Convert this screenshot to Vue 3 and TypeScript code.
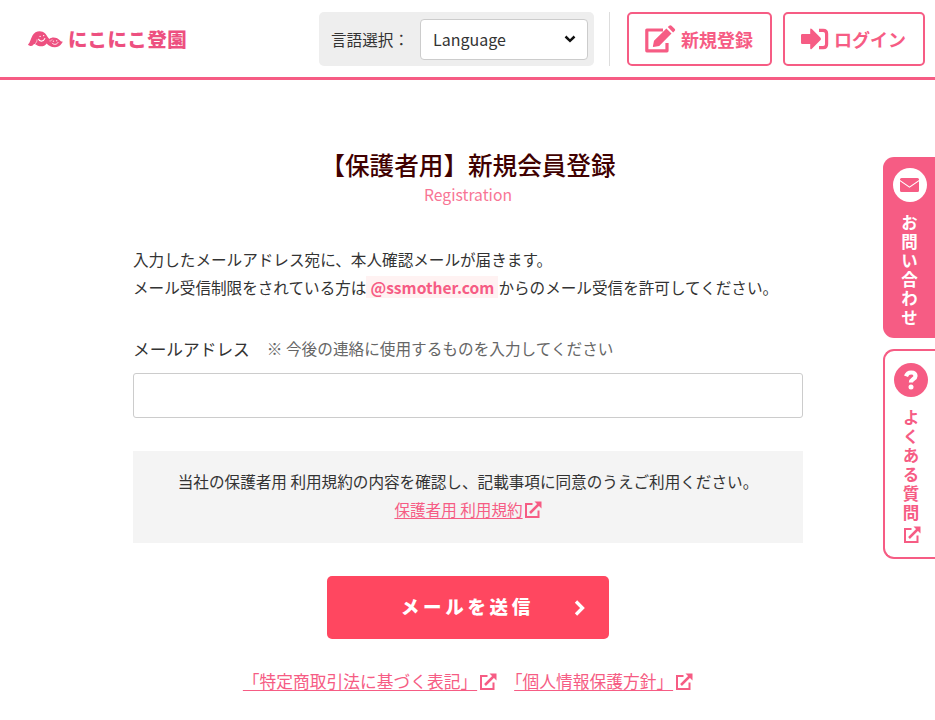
<script setup lang="ts">
import { ref } from 'vue'

const email = ref('')
const legalLinks: { label: string; key: string }[] = [
  { label: '「特定商取引法に基づく表記」', key: 'commerce' },
  { label: '「個人情報保護方針」', key: 'privacy' },
]
</script>

<template>
  <div class="page">
    <svg class="symbols" aria-hidden="true">
      <symbol id="external" viewBox="0 0 18 18">
        <path d="M8.5 3H2v13h12.5V9.5" fill="none" stroke="currentColor" stroke-width="2" />
        <path d="M6 12 15 3" fill="none" stroke="currentColor" stroke-width="2.5" />
        <path d="M10.5 0.5H17.5V7.5z" fill="currentColor" />
      </symbol>
    </svg>

    <header class="header">
      <a class="logo" href="#">
        <svg class="logo-mark" viewBox="0 0 35 17">
          <path d="M0 13.5C2 12 2.5 8 4.5 4.5C7-.2 13.5-1.2 17.2 2.6C19 4.5 19.7 6.7 21.3 8.1C23.5 6 28.5 6 31.2 8.8C32.5 10.2 33.4 10.8 35 10.7C33.5 12 32.5 16 27 16.2C23 16.3 20.5 14.3 18.7 12.4C16.5 15.5 12 16.5 8.2 13.7C6.5 12.5 5.8 12.8 5 14.3C3.5 15.6 1 15 0 13.5z" fill="#ed5080" />
          <g fill="none" stroke="#fff" stroke-linecap="round">
            <path d="M10.6 8.3C11.5 10.8 15.5 10.8 16.8 7.6M12 5.4h.2M15.6 4.6h.2" stroke-width="1.1" />
            <path d="M7.3 12.6C8.6 11.8 9 10.2 9 8.8M21.8 10C22.8 10.2 23.6 9.6 24 8.6" stroke-width=".6" />
            <path d="M24.2 12.2C25.6 14 28.8 13.8 30 11.6M25.2 10.2h.5M28.4 9.8h.5" stroke-width=".9" />
          </g>
        </svg>
        <span class="logo-text">にこにこ登園</span>
      </a>
      <div class="language">
        <span>言語選択：</span>
        <div class="select">
          <span>Language</span>
          <svg class="caret" viewBox="0 0 12 8"><path d="M1.5 1.5 6 5.8l4.5-4.3" fill="none" stroke="#111" stroke-width="2.5" /></svg>
        </div>
      </div>
      <nav class="nav">
        <a class="nav-button" href="#">
          <svg class="edit" viewBox="0 0 31 28">
            <path d="M18 5H1.8v20.8H22V18" fill="none" stroke="currentColor" stroke-width="3.2" stroke-linejoin="round" />
            <path d="M9 15.8 21.4 3.5l5.1 5.1L14.2 21l-5.8 1q-.7 0-.5-.8z" fill="currentColor" />
            <path d="m22.8 2.1 1.4-1.4q1.2-1.1 2.3 0l3.1 3.1q1.1 1.1 0 2.2L28.1 7.5z" fill="currentColor" />
          </svg>
          <span>新規登録</span>
        </a>
        <a class="nav-button login" href="#">
          <svg class="enter" viewBox="0 0 28 22">
            <path d="M1.2 6h8V1.7q0-2 1.7-.7l8.4 8.6q1.2 1.3 0 2.7l-8.4 8.5q-1.7 1.3-1.7-.7V16h-8Q0 16 0 14.8V7.2Q0 6 1.2 6z" fill="currentColor" />
            <path d="M18 2.4h4.2q3.4 0 3.4 3.4v10.4q0 3.4-3.4 3.4H18" fill="none" stroke="currentColor" stroke-width="3.2" />
          </svg>
          <span>ログイン</span>
        </a>
      </nav>
    </header>

    <main class="main">
      <h1>【保護者用】新規会員登録</h1>
      <p class="subtitle">Registration</p>
      <p class="intro">
        入力したメールアドレス宛に、本人確認メールが届きます。<br />メール受信制限をされている方は<strong>@ssmother.com</strong>からのメール受信を許可してください。
      </p>
      <label class="field">
        <span class="field-head"><span class="field-name">メールアドレス</span><span class="field-note">※ 今後の連絡に使用するものを入力してください</span></span>
        <input v-model="email" type="email" />
      </label>
      <div class="terms">
        <span>当社の保護者用 利用規約の内容を確認し、記載事項に同意のうえご利用ください。</span>
        <a href="#"><span>保護者用 利用規約</span><svg class="external"><use href="#external" /></svg></a>
      </div>
      <button class="submit" type="button">
        <span>メールを送信</span>
        <svg class="chevron" viewBox="0 0 12 18"><path d="m2 2.5 6.5 6.5L2 15.5" fill="none" stroke="currentColor" stroke-width="3.3" /></svg>
      </button>
      <footer class="legal">
        <a v-for="link in legalLinks" :key="link.key" :class="link.key" href="#"><span>{{ link.label }}</span><svg class="external"><use href="#external" /></svg></a>
      </footer>
    </main>

    <aside class="side">
      <a class="tab contact" href="#">
        <span class="badge"><svg class="mail" viewBox="0 0 19 14">
          <path d="M1.5 0h16Q19 0 19 1.5V2L9.5 8.5 0 2v-.5Q0 0 1.5 0zM0 3.2l9.5 6.5L19 3.2v9.3q0 1.5-1.5 1.5h-16Q0 14 0 12.5z" fill="currentColor" />
        </svg></span>
        <span class="tab-text">お問い合わせ</span>
      </a>
      <a class="tab faq" href="#">
        <span class="badge"><svg class="question" viewBox="0 0 14 20">
          <path d="M2 6.3C3 3.4 5 2.5 7.1 2.5c2.8 0 4.4 1.3 4.4 3.5 0 3.2-4.6 2.9-4.6 6.6" fill="none" stroke="currentColor" stroke-width="4.2" />
          <circle cx="7" cy="17" r="2.5" fill="currentColor" />
        </svg></span>
        <span class="tab-text">よくある質問</span>
        <svg class="external"><use href="#external" /></svg>
      </a>
    </aside>
  </div>
</template>

<style>
body { background: #fff; }
</style>

<style scoped>
* { box-sizing: border-box; }
.page {
  position: relative;
  width: 935px;
  height: 720px;
  overflow: hidden;
  font-family: "Noto Sans CJK JP", sans-serif;
  font-size: 15.6px;
  line-height: 28px;
  color: #333;
}
a { color: #f65c84; text-decoration: none; }
svg { display: block; flex: none; }
.symbols { position: absolute; width: 0; height: 0; }
.header {
  display: flex;
  align-items: flex-start;
  height: 80px;
  padding: 12px 10px 0 28px;
  border-bottom: 3px solid #f65c84;
}
.logo { display: flex; align-items: center; height: 55px; color: #ed5080; }
.logo-mark { width: 35px; height: 17px; }
.logo-text { margin: -2px 0 0 5px; font-size: 19.5px; font-weight: 900; letter-spacing: .5px; white-space: nowrap; }
.language {
  display: flex;
  align-items: center;
  justify-content: space-between;
  width: 275px;
  height: 54px;
  margin-left: auto;
  padding: 0 6px 0 12px;
  border-radius: 5px;
  background: #eee;
}
.select {
  display: flex;
  align-items: center;
  justify-content: space-between;
  width: 168px;
  height: 41px;
  padding: 0 11px 0 12px;
  border: 1px solid #ccc;
  border-radius: 4px;
  background: #fff;
  font-size: 16px;
}
.caret { width: 12px; height: 8px; }
.nav { display: flex; gap: 11px; margin-left: 15px; padding-left: 17px; border-left: 1px solid #ddd; }
.nav-button {
  display: flex;
  align-items: center;
  justify-content: center;
  gap: 5px;
  width: 145px;
  height: 54px;
  padding-right: 1px;
  border: 2px solid #f65c84;
  border-radius: 5px;
  font-size: 18px;
  font-weight: 700;
}
.login { width: 142px; }
.edit { width: 31px; height: 28px; }
.enter { width: 28px; height: 22px; }
.main { display: flex; flex-direction: column; width: 670px; margin: 0 0 0 133px; padding-top: 66px; }
h1 { margin: 0; font-size: 24.6px; font-weight: 500; line-height: 36px; text-align: center; color: #400000; }
.subtitle { margin: 2px 0 0; font-size: 15.7px; line-height: 22px; text-align: center; color: #f87595; }
.intro { margin: 39px 0 0; white-space: nowrap; }
.intro strong { margin: 0; padding: 0 4px; background: #fff2f2; color: #f65c84; font-weight: 700; font-size: 15.6px; line-height: 22px; }
.field { display: block; margin-top: 34px; }
.field-head { display: flex; align-items: center; gap: 17px; }
.field-name { font-size: 16.7px; }
.field-note { font-size: 15.65px; color: #666; }
input { display: block; width: 670px; height: 45px; margin-top: 10px; padding: 0 12px; border: 1px solid #ccc; border-radius: 3px; background: #fff; font: inherit; }
.terms { display: flex; flex-direction: column; align-items: center; height: 92px; margin-top: 33px; padding-top: 16px; background: #f4f4f4; }
.terms a { display: flex; align-items: center; }
.terms .external { margin: 2px 0 0 1px; }
.terms a span, .legal a span { text-decoration: underline; text-underline-offset: 2px; }
.external { width: 18px; height: 18px; }
.submit {
  display: flex;
  align-items: center;
  justify-content: flex-end;
  width: 282px;
  height: 63px;
  margin: 33px 0 0 194px;
  padding: 0 23px 0 0;
  border: 0;
  border-radius: 5px;
  background: #ff4760;
  color: #fff;
  font-family: inherit;
  font-size: 18.5px;
  font-weight: 900;
  letter-spacing: .2em;
}
.submit span { margin-bottom: 4px; }
.chevron { width: 12px; height: 18px; margin-left: 40px; }
.legal { display: flex; justify-content: center; gap: 17px; margin-top: 28px; font-size: 16.74px; white-space: nowrap; }
.legal a { display: flex; align-items: center; }
.legal .external { margin: 2px 0 0 2px; }
.privacy { text-spacing-trim: trim-start; }
.side { position: absolute; top: 157px; right: 0; display: flex; flex-direction: column; gap: 11px; width: 52px; }
.tab { display: flex; flex-direction: column; align-items: center; height: 181px; padding-top: 11px; border-radius: 11px 0 0 11px; }
.contact { background: #f65c84; color: #fff; }
.faq { height: 210px; padding-top: 12px; border: 2px solid #f65c84; border-right: 0; }
.badge { display: flex; align-items: center; justify-content: center; width: 34px; height: 34px; margin-left: 1px; border-radius: 50%; background: #fff; color: #f65c84; }
.faq .badge { background: #f65c84; color: #fff; margin-left: 2px; }
.mail { width: 19px; height: 14px; }
.question { width: 14px; height: 20px; }
.tab-text { writing-mode: vertical-rl; margin: 12px 0 0 1px; font-size: 16.5px; font-weight: 700; letter-spacing: 2.5px; line-height: 20px; }
.faq .tab-text { margin-left: 2px; }
.faq .external { margin: 3px 0 0 4px; }
</style>
